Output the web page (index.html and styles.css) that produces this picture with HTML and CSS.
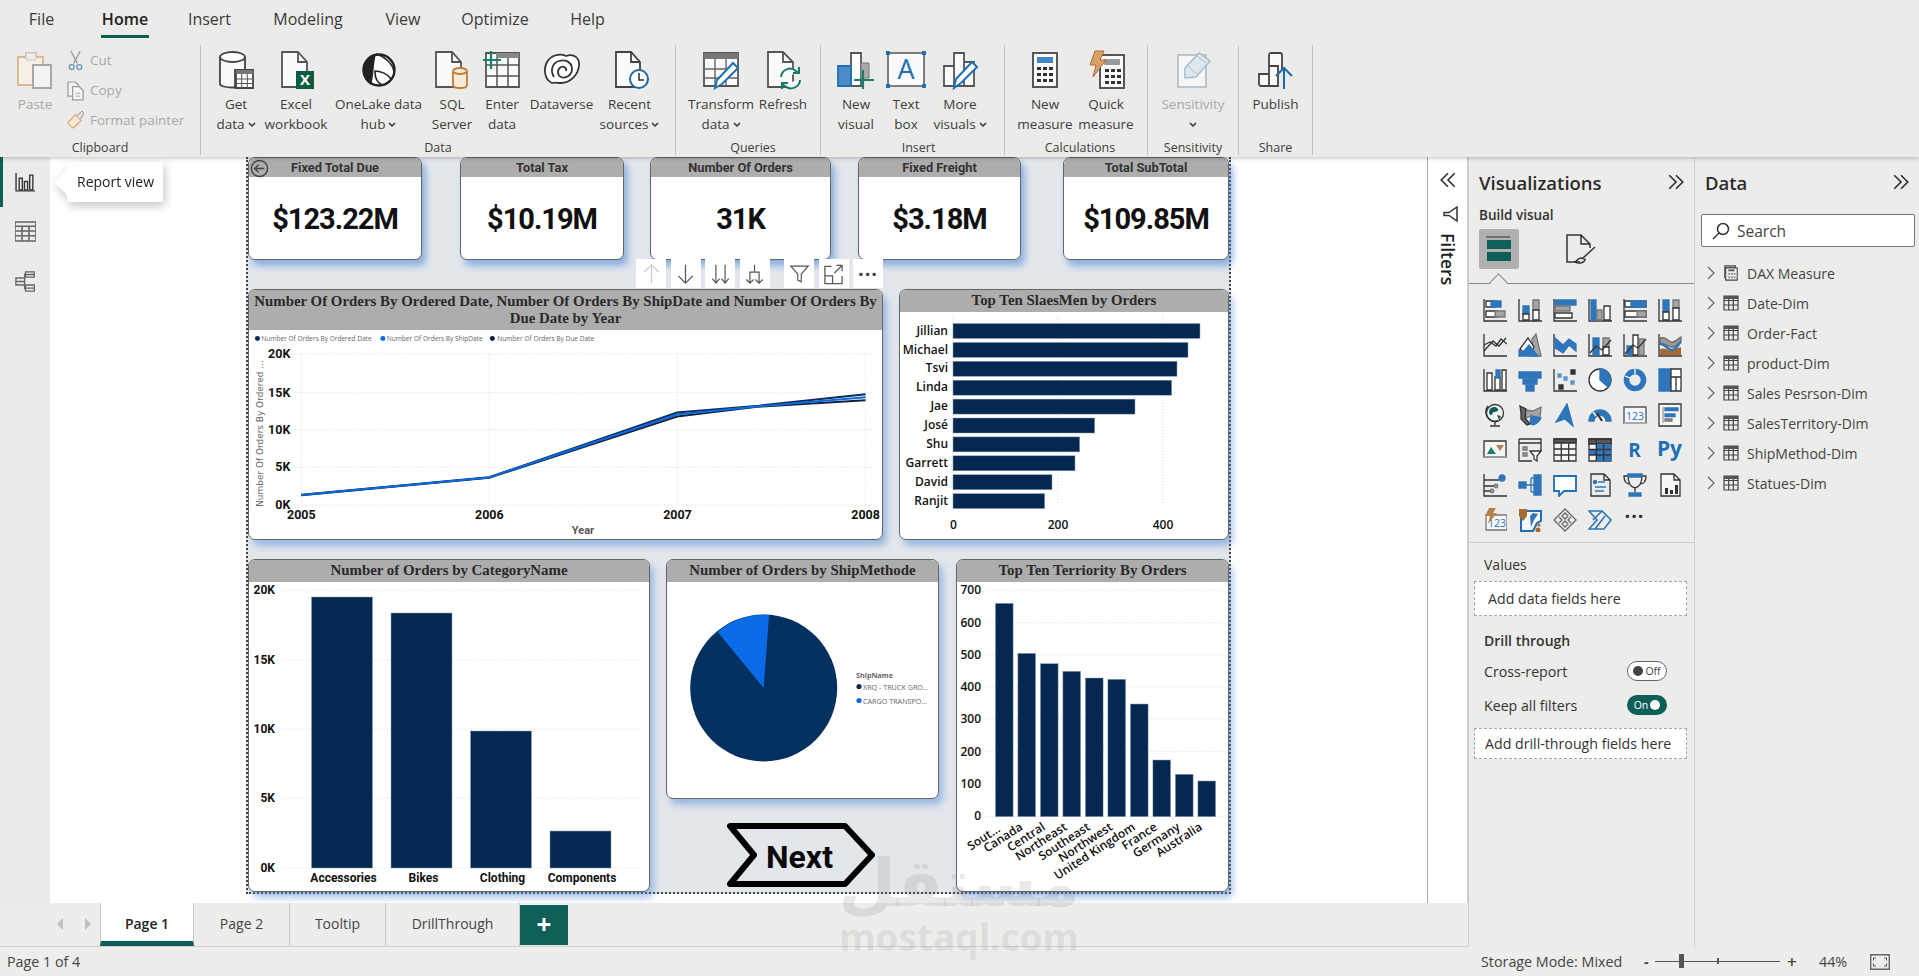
FILE: index.html
```html
<!DOCTYPE html>
<html lang="en">
<head>
<meta charset="utf-8">
<title>Power BI Desktop</title>
<link rel="stylesheet" href="styles.css">
</head>
<body>
<svg class="defs" width="0" height="0">
  <symbol id="tbl" viewBox="0 0 16 16"><path class="tb" d="M1 1h14v14H1zM1 5.5h14M1 10h14M5.7 1v14M10.3 1v14"/><path class="tbh" d="M1 1h14v3H1z"/></symbol>
  <symbol id="dbl" viewBox="0 0 16 16"><path d="M2 2l6 6-6 6M8 2l6 6-6 6" class="chev"/></symbol>
  <symbol id="dd" viewBox="0 0 8 6"><path d="M1 1l3 3 3-3" class="ddp"/></symbol>
</svg>
<div class="app">
  <header class="ribbon">
    <nav class="tabs">
      <span>File</span><span class="on">Home</span><span>Insert</span><span>Modeling</span><span>View</span><span>Optimize</span><span>Help</span>
    </nav>
    <div class="groups">
      <section class="grp g-clip">
        <div class="btns">
          <div class="btn off w56">
            <svg class="ri" viewBox="0 0 40 40"><path d="M3 7h8V3h10v4h7v28H3z" fill="#f6efe6" stroke="#dcb98e" stroke-width="2"/><path d="M11 3h10v7H11z" fill="#eee" stroke="#c8c8c8"/><path d="M18 15h18v23H18z" fill="#f3f3f3" stroke="#a8a8a8" stroke-width="2"/></svg>
            <p>Paste</p>
          </div>
          <div class="clipcol">
            <div class="cr"><svg viewBox="0 0 18 22"><path d="M4 1l7 13M14 1L7 14" stroke="#9a9a9a" fill="none" stroke-width="1.4"/><circle cx="5" cy="18" r="2.6" fill="none" stroke="#6a94c4" stroke-width="1.4"/><circle cx="13" cy="18" r="2.6" fill="none" stroke="#6a94c4" stroke-width="1.4"/></svg><span>Cut</span></div>
            <div class="cr"><svg viewBox="0 0 18 22"><path d="M1 2h8l3 3v12H1z" fill="#f2f2f2" stroke="#999" stroke-width="1.3"/><path d="M6 7h7l4 4v10H6z" fill="#f8f8f8" stroke="#999" stroke-width="1.3"/><path d="M9 14h5M9 17h5" stroke="#aaa"/></svg><span>Copy</span></div>
            <div class="cr"><svg viewBox="0 0 18 22"><path d="M1 13l8-8 6 6-8 8c-2-1-5-3-6-6z" fill="#f4e7d6" stroke="#d8a878" stroke-width="1.3"/><path d="M10 6l6-5 2 2-4 7" fill="#ddd" stroke="#999"/></svg><span>Format painter</span></div>
          </div>
        </div>
        <h6>Clipboard</h6>
      </section>
      <section class="grp g-data">
        <div class="btns">
          <div class="btn w56">
            <svg class="ri" viewBox="0 0 40 40"><path d="M4 7v27c0 2 6 3.500 12 3.500h3V20h10V7" fill="#fafafa" stroke="#444" stroke-width="1.800"/><ellipse cx="16.500" cy="7" rx="12.500" ry="5" fill="#fff" stroke="#444" stroke-width="1.800"/><path d="M20 20h17v18H20z" fill="#fff" stroke="#444" stroke-width="1.800"/><path d="M20 20h17v4H20z" fill="#777"/><path d="M20 29h17M20 33.500h17M25.700 24v14M31.300 24v14" stroke="#555"/></svg>
            <p>Get<br>data<svg class="dd"><use href="#dd"/></svg></p>
          </div>
          <div class="btn w64">
            <svg class="ri" viewBox="0 0 40 40"><path d="M6 2h16l9 10v25H6z" fill="#fafafa" stroke="#555" stroke-width="1.800"/><path d="M22 2v10h9" fill="none" stroke="#555" stroke-width="1.800"/><rect x="20" y="21" width="18" height="18" fill="#0d5c42"/><text class="xl" x="29" y="35">X</text></svg>
            <p>Excel<br>workbook</p>
          </div>
          <div class="btn w101">
            <svg class="ri" viewBox="0 0 40 40"><circle cx="20" cy="20" r="15.500" fill="#fff" stroke="#222" stroke-width="2.400"/><path d="M8 9c-6 9-5 20 4 26 3-9 2-20 5-31C13 4 10 6 8 9z" fill="#222"/><path d="M17 4c8 2 16 9 18 17M15 21c7 0 14 3 17 8M16 22c0 6 3 11 7 13" fill="none" stroke="#222" stroke-width="1.600"/></svg>
            <p>OneLake data<br>hub<svg class="dd"><use href="#dd"/></svg></p>
          </div>
          <div class="btn w46">
            <svg class="ri" viewBox="0 0 40 40"><path d="M4 2h16l9 10v25H4z" fill="#fafafa" stroke="#555" stroke-width="1.800"/><path d="M20 2v10h9" fill="none" stroke="#555" stroke-width="1.800"/><path d="M21 22v13c0 2 3 3 7 3s7-1 7-3V22" fill="#f7ead9" stroke="#c47a38" stroke-width="1.800"/><ellipse cx="28" cy="21" rx="7" ry="3" fill="#f7ead9" stroke="#c47a38" stroke-width="1.800"/></svg>
            <p>SQL<br>Server</p>
          </div>
          <div class="btn w54">
            <svg class="ri" viewBox="0 0 40 40"><path d="M4 3h33v34H4z" fill="#fafafa" stroke="#555" stroke-width="1.800"/><path d="M14 3h23v5H14z" fill="#888"/><path d="M4 15h33M4 26h33M15 8v29M26 8v29" stroke="#555" stroke-width="1.500"/><path d="M9 1v18M1 10h18" stroke="#17806f" stroke-width="2.200"/></svg>
            <p>Enter<br>data</p>
          </div>
          <div class="btn w65">
            <svg class="ri" viewBox="0 0 40 40"><path d="M10 33C3 30 1 20 5 12c4-7 13-9 19-6 8-3 14 2 13 10-1 9-9 17-18 17-3 0-6-1-9 0z" fill="#fff" stroke="#333" stroke-width="1.800"/><path d="M12 27c-4-6-2-14 5-16 6-2 13 1 13 8 0 6-6 10-11 8-4-2-4-8 0-10 3-1 6 1 5 4" fill="none" stroke="#333" stroke-width="1.800"/></svg>
            <p>Dataverse</p>
          </div>
          <div class="btn w71">
            <svg class="ri" viewBox="0 0 40 40"><path d="M6 2h15l9 10v25H6z" fill="#fafafa" stroke="#444" stroke-width="1.800"/><path d="M21 2v10h9" fill="none" stroke="#444" stroke-width="1.800"/><circle cx="29" cy="29" r="9" fill="#fff" stroke="#1a6aa8" stroke-width="2"/><path d="M29 23v7h5" fill="none" stroke="#333" stroke-width="1.600"/></svg>
            <p>Recent<br>sources<svg class="dd"><use href="#dd"/></svg></p>
          </div>
        </div>
        <h6>Data</h6>
      </section>
      <section class="grp g-query">
        <div class="btns">
          <div class="btn w70">
            <svg class="ri" viewBox="0 0 40 40"><path d="M3 3h34v33H3z" fill="#fafafa" stroke="#555" stroke-width="1.800"/><path d="M3 3h34v6H3z" fill="#777"/><path d="M3 19h34M3 28h34M14 9v27M25 9v27" stroke="#666" stroke-width="1.400"/><path d="M14 38l2-8 16-17 5 5-16 16z" fill="#fff" stroke="#1f6fb2" stroke-width="2"/></svg>
            <p>Transform<br>data<svg class="dd"><use href="#dd"/></svg></p>
          </div>
          <div class="btn w54">
            <svg class="ri" viewBox="0 0 40 40"><path d="M5 2h15l10 10v25H5z" fill="#fafafa" stroke="#555" stroke-width="1.800"/><path d="M20 2v10h10" fill="none" stroke="#555" stroke-width="1.800"/><path d="M18 27a9 9 0 0 1 15-6l3 2M37 30a9 9 0 0 1-15 6l-3-2" fill="#fafafa" stroke="#1a7a68" stroke-width="2"/><path d="M36 17v6h-6M19 39v-6h6" fill="none" stroke="#1a7a68" stroke-width="2"/></svg>
            <p>Refresh</p>
          </div>
        </div>
        <h6>Queries</h6>
      </section>
      <section class="grp g-insert">
        <div class="btns">
          <div class="btn w46">
            <svg class="ri" viewBox="0 0 40 40"><path d="M15 3h10v33H15z" fill="#fff" stroke="#555" stroke-width="1.800"/><path d="M2 16h13v20H2z" fill="#4a8bc8" stroke="#1f6fb2" stroke-width="1.800"/><path d="M25 13h8v15h-8z" fill="#aaa" stroke="#777"/><path d="M27 20v19M18 30h20" stroke="#17806f" stroke-width="2.200"/></svg>
            <p>New<br>visual</p>
          </div>
          <div class="btn w54">
            <svg class="ri" viewBox="0 0 40 40"><path d="M2 3h36v33H2z" fill="#f8fafc" stroke="#555" stroke-width="1.500"/><path d="M0 1h4v4H0zM36 1h4v4h-4zM0 34h4v4H0zM36 34h4v4h-4z" fill="#1f6fb2"/><text class="ta" x="20" y="29">A</text></svg>
            <p>Text<br>box</p>
          </div>
          <div class="btn w54">
            <svg class="ri" viewBox="0 0 40 40"><path d="M4 16h10v20H4zM14 3h10v33H14zM24 12h10v24H24z" fill="#fafafa" stroke="#555" stroke-width="1.800"/><path d="M14 38l2-9 16-17 5 5-16 16z" fill="#fff" stroke="#1f6fb2" stroke-width="2"/></svg>
            <p>More<br>visuals<svg class="dd"><use href="#dd"/></svg></p>
          </div>
        </div>
        <h6>Insert</h6>
      </section>
      <section class="grp g-calc">
        <div class="btns">
          <div class="btn w64">
            <svg class="ri" viewBox="0 0 40 40"><path d="M8 3h24v34H8z" fill="#fafafa" stroke="#555" stroke-width="2"/><path d="M12 7h16v6H12z" fill="#3f86c6"/><path d="M12 17h4v3h-4zM18 17h4v3h-4zM24 17h4v3h-4zM12 23h4v3h-4zM18 23h4v3h-4zM24 23h4v3h-4zM12 29h4v3h-4zM18 29h4v3h-4zM24 29h4v3h-4z" fill="#333"/></svg>
            <p>New<br>measure</p>
          </div>
          <div class="btn w58">
            <svg class="ri" viewBox="0 0 40 40"><path d="M14 5h24v33H14z" fill="#fafafa" stroke="#555" stroke-width="2"/><path d="M18 9h16v6H18z" fill="#999"/><path d="M19 19h4v3h-4zM25 19h4v3h-4zM31 19h4v3h-4zM19 25h4v3h-4zM25 25h4v3h-4zM31 25h4v3h-4zM19 31h4v3h-4zM25 31h4v3h-4zM31 31h4v3h-4z" fill="#333"/><path d="M9 1h9l-4 9h6L7 27l3-12H4z" fill="#d9a06a" stroke="#a96a30"/></svg>
            <p>Quick<br>measure</p>
          </div>
        </div>
        <h6>Calculations</h6>
      </section>
      <section class="grp g-sens">
        <div class="btns">
          <div class="btn off w90">
            <svg class="ri" viewBox="0 0 40 40"><path d="M5 5h28v32H5z" fill="#f4f6f8" stroke="#bcc4cc" stroke-width="2"/><path d="M12 18L26 3l11 8-14 16-11 1z" fill="#dfe7ee" stroke="#a8bccd" stroke-width="1.500"/><path d="M15 16l9 8M24 6l9 7" stroke="#a8bccd"/></svg>
            <p>Sensitivity<br><svg class="dd grey"><use href="#dd"/></svg></p>
          </div>
        </div>
        <h6>Sensitivity</h6>
      </section>
      <section class="grp g-share">
        <div class="btns">
          <div class="btn w73">
            <svg class="ri" viewBox="0 0 40 40"><path d="M3 24h10v12H5a2 2 0 0 1-2-2zM13 16h9v20h-9zM13 16V5a2 2 0 0 1 2-2h9a2 2 0 0 1 2 2v14" fill="#fafafa" stroke="#444" stroke-width="1.800"/><path d="M28 39V18M20 26l8-8 8 8" fill="none" stroke="#1a6aa8" stroke-width="2"/></svg>
            <p>Publish</p>
          </div>
        </div>
        <h6>Share</h6>
      </section>
    </div>
  </header>

  <main class="body">
    <aside class="rail">
      <div class="railbtn active"><svg viewBox="0 0 20 20"><path d="M1 1v17h18" class="rl"/><path d="M4 6h3v11H4zM9 9h3v8H9zM14 3h3v14h-3z" class="rl"/></svg></div>
      <div class="railbtn"><svg viewBox="0 0 20 20"><path d="M0 1h20v18H0zM0 1h20v4H0zM0 9.500h20M0 14h20M6.700 5v14M13.300 5v14" class="rg"/></svg></div>
      <div class="railbtn"><svg viewBox="0 0 24 24"><path d="M12 1h10v6H12zM12 16h10v7H12zM1 8h10v8H1zM1 12h10M12 4v0M11 10V4h1M11 14v6h1M12 19.500h10M12 4h10" class="rg"/></svg></div>
    </aside>
    <div class="tip">Report view</div>

    <div class="center">
      <div class="stage">
        <div class="canvas">
          <div class="page">
            <div class="row cards">
              <article class="card c1"><h3><svg class="backb" viewBox="0 0 20 20"><circle cx="10" cy="10" r="8.500"/><path d="M15 10H5M9 6l-4 4 4 4"/></svg>Fixed Total Due</h3><b>$123.22M</b></article>
              <article class="card c2"><h3>Total Tax</h3><b>$10.19M</b></article>
              <article class="card c3"><h3>Number Of Orders</h3><b>31K</b></article>
              <article class="card c4"><h3>Fixed Freight</h3><b>$3.18M</b></article>
              <article class="card c5"><h3>Total SubTotal</h3><b>$109.85M</b></article>
            </div>

            <div class="row mid">
              <article class="chart ch1">
                <h2 class="h39">Number Of Orders By Ordered Date, Number Of Orders By ShipDate and Number Of Orders By Due Date by Year</h2>
                <svg class="plot" viewBox="249 329 633 210">
                  <g class="legend">
                    <circle cx="256" cy="337.500" r="2.500" fill="#0b2a55"/><text x="260" y="340">Number Of Orders By Ordered Date</text>
                    <circle cx="382" cy="337.500" r="2.500" fill="#0a6be0"/><text x="386" y="340">Number Of Orders By ShipDate</text>
                    <circle cx="492" cy="337.500" r="2.500" fill="#111f3a"/><text x="497" y="340">Number Of Orders By Due Date</text>
                  </g>
                  <path class="grid" d="M290 353h587M290 391.500h587M290 429h587M290 467h587M290 505h587M300 353v152M488.700 353v152M677.700 353v152M867 353v152"/>
                  <polyline class="ln a" points="300,494.500 488.700,477 677.700,412 760,405 867,393.500"/>
                  <polyline class="ln c" points="300,495 488.700,477.500 677.700,416 760,406 867,399.500"/>
                  <polyline class="ln b" points="300,494.800 488.700,477.200 677.700,414 760,405.500 867,396.500"/>
                  <g class="ax end">
                    <text x="289" y="357">20K</text><text x="289" y="396">15K</text><text x="289" y="433">10K</text><text x="289" y="471">5K</text><text x="289" y="509">0K</text>
                  </g>
                  <g class="ax mid-a">
                    <text x="300" y="519">2005</text><text x="489" y="519">2006</text><text x="678" y="519">2007</text><text x="867" y="519">2008</text>
                  </g>
                  <text class="axt" x="583" y="534">Year</text>
                  <text class="ayt" transform="translate(262 433) rotate(-90)">Number Of Orders By Ordered ...</text>
                </svg>
              </article>
              <article class="chart ch2">
                <h2 class="h22">Top Ten SlaesMen by Orders</h2>
                <svg class="plot" viewBox="900 312 328 227">
                  <path class="grid" d="M953 316v190M1057.700 316v190M1162.700 316v190"/>
                  <g class="bars">
                    <rect x="953" y="323.500" width="247" height="15"/><rect x="953" y="342.400" width="235" height="15"/><rect x="953" y="361.300" width="224" height="15"/><rect x="953" y="380.200" width="218.700" height="15"/><rect x="953" y="399.100" width="182" height="15"/><rect x="953" y="418" width="141.700" height="15"/><rect x="953" y="436.900" width="126.700" height="15"/><rect x="953" y="455.800" width="122" height="15"/><rect x="953" y="474.700" width="99" height="15"/><rect x="953" y="493.600" width="91.700" height="15"/>
                  </g>
                  <g class="cat end">
                    <text x="948" y="334.500">Jillian</text><text x="948" y="353.500">Michael</text><text x="948" y="372">Tsvi</text><text x="948" y="391">Linda</text><text x="948" y="410">Jae</text><text x="948" y="429">José</text><text x="948" y="448">Shu</text><text x="948" y="466.500">Garrett</text><text x="948" y="485.500">David</text><text x="948" y="504.500">Ranjit</text>
                  </g>
                  <g class="cat mid-a">
                    <text x="953.500" y="529">0</text><text x="1058" y="529">200</text><text x="1163" y="529">400</text>
                  </g>
                </svg>
              </article>
            </div>

            <div class="row low">
              <article class="chart ch3">
                <h2 class="h22">Number of Orders by CategoryName</h2>
                <svg class="plot" viewBox="249 582 400 309">
                  <path class="grid" d="M282 590h362M282 660h362M282 729h362M282 798h362M282 868h362"/>
                  <g class="bars">
                    <rect x="311.500" y="597" width="61" height="271"/><rect x="391" y="613" width="61" height="255"/><rect x="470.500" y="731" width="61" height="137"/><rect x="550" y="831" width="61" height="37"/>
                  </g>
                  <g class="ax end">
                    <text x="275" y="594">20K</text><text x="275" y="664">15K</text><text x="275" y="733">10K</text><text x="275" y="802">5K</text><text x="275" y="872">0K</text>
                  </g>
                  <g class="ax mid-a">
                    <text x="343.500" y="882">Accessories</text><text x="423.500" y="882">Bikes</text><text x="502.500" y="882">Clothing</text><text x="582" y="882">Components</text>
                  </g>
                </svg>
              </article>
              <div class="midcol">
                <article class="chart ch4">
                  <h2 class="h22">Number of Orders by ShipMethode</h2>
                  <svg class="plot" viewBox="667 582 271 216">
                    <circle cx="763.700" cy="688" r="73.500" fill="#03305f"/>
                    <path d="M763.700 688L717.700 632A73.500 73.500 0 0 1 769 615z" fill="#0a6be8"/>
                    <g class="lg2">
                      <text class="lgt" x="856" y="678">ShipName</text>
                      <circle cx="859" cy="686.500" r="2.600" fill="#0b2a55"/><text x="863" y="690">XRQ - TRUCK GRO...</text>
                      <circle cx="859" cy="700.500" r="2.600" fill="#0a6be8"/><text x="863" y="703.500">CARGO TRANSPO...</text>
                    </g>
                  </svg>
                </article>
                <svg class="next" viewBox="727 823 148 64">
                  <path class="nextp" d="M730 826H845L872 855 845 884H730L754 855Z"/>
                  <text class="nextt" x="766" y="868">Next</text>
                </svg>
              </div>
              <article class="chart ch5">
                <h2 class="h22">Top Ten Terriority By Orders</h2>
                <svg class="plot" viewBox="957 582 271 309">
                  <path class="grid" d="M986 590h237M986 622.700h237M986 655h237M986 687h237M986 719h237M986 751.700h237M986 784h237M986 816.700h237"/>
                  <g class="bars">
                    <rect x="995.400" y="603.300" width="17.700" height="213.400"/><rect x="1017.900" y="653.300" width="17.700" height="163.400"/><rect x="1040.400" y="663.700" width="17.700" height="153"/><rect x="1062.900" y="671.300" width="17.700" height="145.400"/><rect x="1085.400" y="678" width="17.700" height="138.700"/><rect x="1107.900" y="679.300" width="17.700" height="137.400"/><rect x="1130.400" y="704" width="17.700" height="112.700"/><rect x="1152.900" y="760" width="17.700" height="56.700"/><rect x="1175.400" y="774.300" width="17.700" height="42.400"/><rect x="1197.900" y="781" width="17.700" height="35.700"/>
                  </g>
                  <g class="cat end">
                    <text x="981" y="594">700</text><text x="981" y="627">600</text><text x="981" y="659">500</text><text x="981" y="691">400</text><text x="981" y="723">300</text><text x="981" y="756">200</text><text x="981" y="788">100</text><text x="981" y="820">0</text>
                  </g>
                  <g class="cat end">
                    <text transform="translate(1001 831) rotate(-33)">Sout...</text>
                    <text transform="translate(1023.500 829) rotate(-33)">Canada</text>
                    <text transform="translate(1046 829) rotate(-33)">Central</text>
                    <text transform="translate(1068 829) rotate(-33)">Northeast</text>
                    <text transform="translate(1091 829) rotate(-33)">Southeast</text>
                    <text transform="translate(1113.500 829) rotate(-33)">Northwest</text>
                    <text transform="translate(1136 829) rotate(-33)">United Kingdom</text>
                    <text transform="translate(1158 829) rotate(-33)">France</text>
                    <text transform="translate(1181 829) rotate(-33)">Germany</text>
                    <text transform="translate(1203 829) rotate(-33)">Australia</text>
                  </g>
                </svg>
              </article>
            </div>

            <div class="vtools">
              <span><svg viewBox="0 0 20 24" class="tu"><path d="M10 22V2M2 10l8-8 8 8"/></svg></span>
              <span><svg viewBox="0 0 20 24"><path d="M10 2v20M2 14l8 8 8-8"/></svg></span>
              <span><svg viewBox="0 0 20 24"><path d="M5 2v20M1 17l4 5 4-5M15 2v20M11 17l4 5 4-5"/></svg></span>
              <span><svg viewBox="0 0 20 24"><path d="M10 2v8M5 22V10h10v12M1 18l4 4 4-4M11 18l4 4 4-4"/></svg></span>
              <span class="sp"><svg viewBox="0 0 24 24"><path d="M2 3h20l-8 9v9l-4-2v-7z"/></svg></span>
              <span><svg viewBox="0 0 22 22"><path d="M9 3H2v18h18v-8M2 13h8v8M12 10l8-8M14 2h6v6"/></svg></span>
              <span class="dots">···</span>
            </div>
          </div>
        </div>
        <aside class="filters">
          <svg class="ch" viewBox="0 0 16 16"><path d="M14 2L8 8l6 6M8 2L2 8l6 6" class="chev"/></svg>
          <svg class="fn" viewBox="0 0 16 16"><path d="M14 1v14L6 9.500H1v-3h5z" class="chev"/></svg>
          <span>Filters</span>
        </aside>
      </div>
      <div class="pagetabs">
        <div class="arrows"><i class="al"></i><i class="ar"></i></div>
        <span class="ptab t1 on">Page 1</span>
        <span class="ptab t2">Page 2</span>
        <span class="ptab t3">Tooltip</span>
        <span class="ptab t4">DrillThrough</span>
        <span class="plus">+</span>
      </div>
    </div>

    <aside class="vizpane">
      <div class="phead"><h4>Visualizations</h4><svg class="ch"><use href="#dbl"/></svg></div>
      <div class="sub">Build visual</div>
      <div class="buildrow">
        <div class="buildon"><svg viewBox="0 0 30 30"><path d="M2 3h24" stroke="#333" fill="none"/><path d="M3 6h24v9H3zM3 18h24v9H3z" fill="#0d5f58"/></svg></div>
        <svg class="fmt" viewBox="0 0 32 32"><path d="M15 29H2V2h14l9 9v4M16 2v9h9" class="chev"/><path d="M30 14L18 25M16 25c-3 0-4 3-6 4 4 2 10 1 10-3z" class="chev"/></svg>
        <i class="notch"></i>
      </div>
      <div class="vizgrid">
        <svg class="vi" viewBox="0 0 24 24"><path d="M1 1v22h23"/><path class="w" d="M3 3h9v6H3z"/><path class="b" d="M8 3h10v6H8z"/><path class="w" d="M3 13h11v6H3z"/><path class="g" d="M12 13h10v6H12z"/></svg>
        <svg class="vi" viewBox="0 0 24 24"><path d="M1 1v22h23"/><path class="b" d="M5 8h6v8H5z"/><path class="w" d="M5 16h6v6H5z"/><path class="g" d="M15 2h6v10h-6z"/><path class="w" d="M15 12h6v10h-6z"/></svg>
        <svg class="vi" viewBox="0 0 24 24"><path d="M1 1v22h23"/><path class="b" d="M2 2h21v5H2z"/><path class="g" d="M2 8h15v5H2z"/><path class="w" d="M2 15h17v5H2z"/></svg>
        <svg class="vi" viewBox="0 0 24 24"><path d="M1 1v22h23"/><path class="b" d="M3 2h5v20H3z"/><path class="g" d="M9 12h5v10H9z"/><path class="w" d="M16 8h6v14h-6z"/></svg>
        <svg class="vi" viewBox="0 0 24 24"><path d="M1 1v22h23"/><path class="w" d="M2 3h21v6H2z"/><path class="b" d="M8 3h15v6H8z"/><path class="w" d="M2 13h21v6H2z"/><path class="g" d="M14 13h9v6h-9z"/></svg>
        <svg class="vi" viewBox="0 0 24 24"><path d="M1 1v22h23"/><path class="b" d="M5 2h6v12H5z"/><path class="w" d="M5 14h6v8H5z"/><path class="g" d="M15 2h6v8h-6z"/><path class="w" d="M15 10h6v12h-6z"/></svg>

        <svg class="vi" viewBox="0 0 24 24"><path d="M1 1v22h23"/><path d="M1 18l9-10 6 5 7-8"/><path class="bl" d="M1 12l6-3 6 4 5-7 6 5"/></svg>
        <svg class="vi" viewBox="0 0 24 24"><path class="g" d="M14 6l4-5 5 22h-9z"/><path class="w" d="M2 16l8-11 6 9-6 9z"/><path class="b" d="M1 23v-6l4 2 6-7 9 11z"/></svg>
        <svg class="vi" viewBox="0 0 24 24"><path d="M1 1v22h23"/><path class="b" d="M2 5l8 7 6-6 7 5v7l-7-6-6 8-8-5z"/></svg>
        <svg class="vi" viewBox="0 0 24 24"><path d="M1 1v22h23"/><path class="b" d="M5 5h6v17H5z"/><path class="g" d="M15 5h6v9h-6z"/><path class="w" d="M15 14h6v8h-6z"/><path d="M2 20l6-7 6 4 9-10"/></svg>
        <svg class="vi" viewBox="0 0 24 24"><path d="M1 1v22h23"/><path class="b" d="M4 13h5v9H4z"/><path class="w" d="M10 2h5v20h-5z"/><path class="g" d="M16 6h5v16h-5z"/><path d="M2 21l8-9 5 3 8-9"/></svg>
        <svg class="vi" viewBox="0 0 24 24"><path d="M1 1v22h23"/><path d="M2 5c7-2 8 5 13 4s5-4 8-5v5c-3 1-4 4-8 5S8 10 2 11z" fill="#999" stroke="#666"/><path d="M2 16c5-2 8 2 12 1s6-2 9-3v8H2z" fill="#a86a35" stroke="none"/><path d="M2 11c5-1 7 6 12 6s6-7 9-8" stroke="#2f75b9" stroke-width="2.600"/></svg>

        <svg class="vi" viewBox="0 0 24 24"><path d="M1 1v22h23"/><path class="w" d="M4 5h5v17H4z"/><path class="w" d="M12 9h5v13h-5z"/><path class="b" d="M13 2h4v8h-4z"/><path class="w" d="M19 2h4v20h-4z"/></svg>
        <svg class="vi" viewBox="0 0 24 24"><path class="b" d="M1 4h22v6H1z"/><path class="b" d="M5 11h14v5H5z"/><path class="b" d="M8 17h8v6H8z"/></svg>
        <svg class="vi" viewBox="0 0 24 24"><path d="M1 1v22h23"/><path class="dk" d="M6 17h4v4H6zM18 2h4v4h-4z"/><path class="b2" d="M5 6h3v3H5zM11 9h3v3h-3zM18 13h3v3h-3z"/></svg>
        <svg class="vi" viewBox="0 0 24 24"><circle class="w" cx="12" cy="12" r="11"/><path class="b" d="M12 1a11 11 0 0 1 8 18l-8-7z"/></svg>
        <svg class="vi" viewBox="0 0 24 24"><circle cx="12" cy="12" r="8.500" fill="none" stroke="#2f75b9" stroke-width="5.600"/><path d="M12 1v5" stroke="#fff"/><path d="M2 8l5 2" stroke="#fff"/></svg>
        <svg class="vi" viewBox="0 0 24 24"><path class="b" d="M1 1h12v11H1zM1 12h12v11H1z"/><path class="w" d="M13 1h10v8H13zM13 9h5v14h-5zM18 9h5v14h-5z"/></svg>

        <svg class="vi" viewBox="0 0 24 24"><circle cx="12" cy="10" r="8.500" fill="#eef4f2"/><path d="M8 5c3-2 6-1 7 1s-2 3-4 3-1 3-3 3-3-5 0-7zM14 12l4 1-2 4z" fill="#0d5f58" stroke="none"/><path d="M5 3a9.500 9.500 0 0 0 10 15M12 19v3M7 23h10"/></svg>
        <svg class="vi" viewBox="0 0 24 24"><path class="g" d="M7 7l8 1 8-4-1 11-9-2-5 2z"/><path class="b" d="M13 13l10 2c-2 4-5 6-8 7l-3-2z"/><path d="M2 3l6 3-1 9 5 6-3 1-6-6V10z" fill="#666"/></svg>
        <svg class="vi" viewBox="0 0 24 24"><path class="b" d="M14 1l6 22-8-7-9 3z"/></svg>
        <svg class="vi" viewBox="0 0 24 24"><path class="b" d="M1 18a11 11 0 0 1 22 0h-5a6 6 0 0 0-12 0z"/><path d="M9 10l5 8" stroke-width="2"/><path d="M5 9l3 4" stroke="#fff"/></svg>
        <svg class="vi" viewBox="0 0 24 24"><path d="M1 4h22v16H1z" fill="#f4f7fa" stroke="#555" stroke-width="1.400"/><path d="M1 20h22" stroke="#aaa" stroke-width="2"/><text class="t123" x="12" y="16.500">123</text></svg>
        <svg class="vi" viewBox="0 0 24 24"><path d="M1 1h22v22H1z" fill="#f6f8fa"/><path d="M5 4v16" stroke="#999"/><path class="b" d="M7 5h13v2.500H7zM7 11h10v2.500H7z"/><path class="g" d="M7 16h7v2H7z"/></svg>

        <svg class="vi" viewBox="0 0 24 24"><path d="M1 3h22v16H1z" fill="#f5f5f5"/><path d="M1 19h22" stroke="#999" stroke-width="2"/><path d="M4 16l4-7 5 7z" fill="#1d7e6e" stroke="none"/><path d="M13 7h8l-4 6z" fill="#b5804c" stroke="none"/></svg>
        <svg class="vi" viewBox="0 0 24 24"><path d="M1 1h22v12M14 23H1V1M1 5h22"/><path class="g" d="M5 9h4v3H5zM5 15h4v3H5z"/><path class="w" d="M12 13h11l-4 5v5l-3-2v-3z"/></svg>
        <svg class="vi" viewBox="0 0 24 24"><path d="M1 1h22v22H1z" fill="#f5f5f5"/><path d="M1 1h22v4H1z" fill="#555"/><path d="M1 11h22M1 17h22M8.300 5v18M15.700 5v18"/></svg>
        <svg class="vi" viewBox="0 0 24 24"><path d="M1 1h22v22H1z" fill="#f5f5f5"/><path d="M1 1h22v5H1z" fill="#555"/><path d="M8 6h15v17H8zM1 12h7v5H1z" fill="#2f75b9" stroke="none"/><path d="M1 11.500h22M1 17h22M8.300 1v22M15.700 6v17"/></svg>
        <span class="tr">R</span>
        <span class="tp">Py</span>

        <svg class="vi" viewBox="0 0 24 24"><path d="M1 1v22h23M1 7h15M1 13h11M1 18h7"/><circle class="b" cx="19" cy="5" r="3"/><circle class="g" cx="13" cy="13" r="1.800"/><circle class="g" cx="9" cy="18" r="1.800"/></svg>
        <svg class="vi" viewBox="0 0 24 24"><path d="M8 12h5M13 5v14M13 5h3M13 12h3M13 19h3" stroke="#2f75b9"/><path class="b" d="M1 9h7v6H1zM16 2h7v6h-7zM16 9h7v6h-7zM16 16h7v6h-7z"/></svg>
        <svg class="vi" viewBox="0 0 24 24"><path d="M1 3h22v15H11l-5 5v-5H1z" fill="#fff" stroke="#1f6fb2" stroke-width="1.800"/></svg>
        <svg class="vi" viewBox="0 0 24 24"><path d="M3 1h13l6 6v16H3zM16 1v6h6"/><circle class="b" cx="7" cy="9" r="1.600"/><path d="M10 9h7M7 14h11M7 18h9" stroke="#2f75b9"/></svg>
        <svg class="vi" viewBox="0 0 24 24"><path d="M5 3H1c0 5 2 8 6 8M19 3h4c0 5-2 8-6 8M5 2h14c0 8-2 12-7 13-5-1-7-5-7-13zM12 15v4"/><path class="b" d="M6 20h12v3H6zM5 1h14v3H5z"/></svg>
        <svg class="vi" viewBox="0 0 24 24"><path d="M3 1h13l6 6v16H3zM16 1v6h6" fill="#f8f8f8"/><path d="M7 15h3v6H7zM12 17h3v4h-3zM17 12h3v9h-3z" fill="#333" stroke="none"/></svg>

        <svg class="vi" viewBox="0 0 24 24"><path d="M3 7h21v15H3z" fill="#f5f7f9" stroke="#777"/><text class="t123 big" x="14" y="19">123</text><path d="M6 0h7l-3 5h4L5 16l2-8H2z" fill="#b5804c" stroke="none"/></svg>
        <svg class="vi" viewBox="0 0 24 24"><path d="M3 3h20v10l-4 2-4 8H3z" fill="#f4f8fb" stroke="#1f6fb2" stroke-width="2"/><path d="M12 8l3-3 5 1-4 6-3 7z" fill="#2f75b9" stroke="none"/><path d="M1 1h8v7l-4 5-4-5z" fill="#a86a35" stroke="none"/><circle cx="21" cy="17" r="1.600" fill="#a86a35" stroke="none"/><circle cx="20" cy="22" r="2.500" fill="#a86a35" stroke="none"/></svg>
        <svg class="vi" viewBox="0 0 24 24"><path d="M12 1l11 11-11 11L1 12zM12 5l3 3-3 3-3-3zM12 13l3 3-3 3-3-3zM6 9l3 3-3 3M18 9l-3 3 3 3" stroke="#666"/></svg>
        <svg class="vi" viewBox="0 0 24 24"><path d="M1 3h13l9 9-7 9H1l8-9zM14 3l-9 9M17 8L7 21" fill="none" stroke="#2f75b9" stroke-width="1.600"/></svg>
        <span class="more">···</span>
      </div>
      <div class="sect">
        <div class="lab">Values</div>
        <div class="well h35">Add data fields here</div>
        <div class="sub dt">Drill through</div>
        <div class="tg r1"><span>Cross-report</span><em class="sw off"><i></i>Off</em></div>
        <div class="tg r2"><span>Keep all filters</span><em class="sw onn">On<i></i></em></div>
        <div class="well h31 drill">Add drill-through fields here</div>
      </div>
    </aside>

    <aside class="datapane">
      <div class="phead"><h4>Data</h4><svg class="ch"><use href="#dbl"/></svg></div>
      <div class="search"><svg viewBox="0 0 18 18"><circle cx="11" cy="7" r="5.500" class="chev"/><path d="M7 11l-6 6" class="chev"/></svg>Search</div>
      <ul class="fields">
        <li><svg class="chv" viewBox="0 0 8 14"><path d="M1 1l6 6-6 6" class="chev"/></svg><svg class="ti" viewBox="0 0 16 18"><path d="M2 3h13v14H2z" class="tb"/><path d="M1 1h12v2H1zM1 1v14" class="tb"/><path d="M5 5h7v2H5z" fill="#555"/><path d="M5 9h2v2H5zM8 9h2v2H8zM11 9h2v2h-2zM5 13h2v2H5zM8 13h2v2H8zM11 13h2v2h-2z" fill="#888"/></svg>DAX Measure</li>
        <li><svg class="chv" viewBox="0 0 8 14"><path d="M1 1l6 6-6 6" class="chev"/></svg><svg class="ti"><use href="#tbl"/></svg>Date-Dim</li>
        <li><svg class="chv" viewBox="0 0 8 14"><path d="M1 1l6 6-6 6" class="chev"/></svg><svg class="ti"><use href="#tbl"/></svg>Order-Fact</li>
        <li><svg class="chv" viewBox="0 0 8 14"><path d="M1 1l6 6-6 6" class="chev"/></svg><svg class="ti"><use href="#tbl"/></svg>product-Dim</li>
        <li><svg class="chv" viewBox="0 0 8 14"><path d="M1 1l6 6-6 6" class="chev"/></svg><svg class="ti"><use href="#tbl"/></svg>Sales Pesrson-Dim</li>
        <li><svg class="chv" viewBox="0 0 8 14"><path d="M1 1l6 6-6 6" class="chev"/></svg><svg class="ti"><use href="#tbl"/></svg>SalesTerritory-Dim</li>
        <li><svg class="chv" viewBox="0 0 8 14"><path d="M1 1l6 6-6 6" class="chev"/></svg><svg class="ti"><use href="#tbl"/></svg>ShipMethod-Dim</li>
        <li><svg class="chv" viewBox="0 0 8 14"><path d="M1 1l6 6-6 6" class="chev"/></svg><svg class="ti"><use href="#tbl"/></svg>Statues-Dim</li>
      </ul>
    </aside>
  </main>

  <footer class="status">
    <span class="pgof">Page 1 of 4</span>
    <span class="mode">Storage Mode: Mixed</span>
    <span class="minus">-</span>
    <div class="track"><i class="thumb"></i><i class="tick"></i></div>
    <span class="plusz">+</span>
    <span class="pct">44%</span>
    <svg class="fit" viewBox="0 0 20 16"><path d="M.7.7h18.600v14.600H.7z" fill="none" stroke="#666" stroke-width="1.400"/><path d="M6 4H3.500v2.500M14 4h2.500v2.500M6 12H3.500V9.500M14 12h2.500V9.500" fill="none" stroke="#555"/></svg>
  </footer>
  <div class="wm" aria-hidden="true"><span class="wa">مستقل</span><span class="we">mostaql.com</span></div>
</div>
</body>
</html>
```
FILE: styles.css
```css
* { box-sizing: border-box; }
html, body { margin: 0; padding: 0; }
body { font-family: "Open Sans", "Noto Sans", sans-serif; color: #333; background: #ececea; overflow: hidden; }
.defs { position: absolute; }
.app { position: relative; width: 1919px; height: 976px; display: flex; flex-direction: column; overflow: hidden; }
h2, h3, h4, h6, p, ul { margin: 0; padding: 0; font-weight: normal; }

/* ribbon */
.ribbon { height: 157px; background: #ebebe9; position: relative; z-index: 5; box-shadow: 0 1px 4px rgba(0,0,0,.25); }
.tabs { display: flex; height: 45px; font-size: 16px; color: #3a3a3a; }
.tabs span { text-align: center; line-height: 38px; position: relative; }
.tabs span:nth-child(1) { width: 83px; }
.tabs span:nth-child(2) { width: 84px; }
.tabs span:nth-child(3) { width: 85px; }
.tabs span:nth-child(4) { width: 112px; }
.tabs span:nth-child(5) { width: 78px; }
.tabs span:nth-child(6) { width: 106px; }
.tabs span:nth-child(7) { width: 79px; }
.tabs .on { font-weight: 600; color: #222; }
.tabs .on::after { content: ""; position: absolute; left: 18px; right: 18px; top: 35px; height: 3px; background: #0d5f58; }
.groups { display: flex; height: 110px; }
.grp { display: flex; flex-direction: column; border-right: 1px solid #c4c4c4; }
.g-clip { width: 201px; }
.g-data { width: 475px; padding-left: 7px; }
.g-query { width: 145px; padding-left: 10px; }
.g-insert { width: 184px; padding-left: 12px; }
.g-calc { width: 143px; padding-left: 8px; }
.g-sens { width: 91px; }
.g-share { width: 74px; }
.btns { display: flex; height: 95px; }
.btn { text-align: center; font-size: 13.5px; line-height: 20px; color: #3d3d3d; white-space: nowrap; }
.btn p { margin-top: 4px; }
.ri { display: block; width: 40px; height: 40px; margin: 5px auto 0; }
.btn.off { color: #a9a9a9; }
.w46 { width: 46px; } .w54 { width: 54px; } .w56 { width: 56px; } .w58 { width: 58px; } .w64 { width: 64px; }
.w65 { width: 65px; } .w70 { width: 70px; } .w71 { width: 71px; } .w73 { width: 73px; } .w90 { width: 90px; } .w101 { width: 101px; }
.g-clip .w56 { margin-left: 7px; }
.dd { width: 8px; height: 6px; margin-left: 3px; vertical-align: 1px; }
.dd.grey { margin-left: 0; }
.dd.grey .ddp, .off .ddp { stroke: #aaa; }
.ddp { fill: none; stroke: #333; stroke-width: 1.500; }
.grp h6 { font-size: 12.5px; line-height: 15px; text-align: center; color: #3d3d3d; }
.g-data h6 { padding-right: 7px; }
.clipcol { margin-left: 4px; padding-top: 0; }
.cr { height: 30px; display: flex; align-items: center; font-size: 13.5px; color: #a9a9a9; }
.cr svg { width: 17px; height: 21px; margin-right: 6px; flex: none; }
.xl { font: bold 15px "Open Sans", sans-serif; fill: #fff; text-anchor: middle; }
.ta { font: 27px "Open Sans", sans-serif; fill: #1f6fb2; text-anchor: middle; }

/* body */
.body { flex: 1; display: flex; min-height: 0; position: relative; }
.rail { width: 50px; flex: none; background: #ebebe9; padding-top: 0; }
.railbtn { height: 50px; display: flex; align-items: center; justify-content: center; border-left: 3px solid transparent; padding-right: 3px; }
.railbtn:nth-child(2) { height: 49px; }
.railbtn.active { border-left-color: #0d5f58; }
.railbtn svg { width: 21px; height: 21px; }
.rl { fill: none; stroke: #333; stroke-width: 1.300; }
.rg { fill: none; stroke: #666; stroke-width: 1.500; }
.tip { position: absolute; left: 67px; top: 5px; width: 96px; height: 40px; background: #fff; font-size: 14px; line-height: 40px; padding-left: 10px; color: #222; filter: drop-shadow(2px 4px 5px rgba(0,0,0,.22)); z-index: 4; white-space: nowrap; }
.tip::before { content: ""; position: absolute; left: -13px; top: 7px; width: 0; height: 0; border: 13px solid transparent; border-left: 0; border-right-color: #fff; }

.center { width: 1418px; flex: none; display: flex; flex-direction: column; }
.stage { height: 746px; display: flex; }
.canvas { width: 1377px; background: #fff; padding-left: 196px; flex: none; }
.page { position: relative; width: 985px; height: 737px; background: #e3e7ec; border: 2px dotted #444; border-top: 0; display: flex; flex-direction: column; }
.row { display: flex; flex: none; }
.cards { height: 103px; }
.card { background: #fff; border: 1px solid #666; border-radius: 7px; box-shadow: 4px 6px 7px rgba(70,130,210,.55); display: flex; flex-direction: column; overflow: hidden; position: relative; }
.card h3 { height: 19px; background: #adadad; font: bold 12.8px/20px Roboto, sans-serif; color: #333; text-align: center; flex: none; }
.card b { flex: 1; font: bold 29px/1 Roboto, sans-serif; letter-spacing: -1px; color: #111; display: flex; align-items: center; justify-content: center; padding-top: 3px; }
.c1 { width: 174px; }
.c2 { width: 164px; margin-left: 38px; }
.c3 { width: 181px; margin-left: 26px; }
.c4 { width: 163px; margin-left: 27px; }
.c5 { width: 166px; margin-left: 42px; }
.backb { position: absolute; left: 1px; top: 1px; width: 19px; height: 19px; fill: none; stroke: #444; stroke-width: 1.500; }
.mid { height: 251px; margin-top: 29px; }
.low { height: 333px; margin-top: 19px; }
.chart { background: #fff; border: 1px solid #666; border-radius: 7px; box-shadow: 4px 6px 7px rgba(70,130,210,.45); display: flex; flex-direction: column; overflow: hidden; }
.chart h2 { background: #adadad; font: bold 14.9px/17px "Liberation Serif", serif; color: #2a2a2a; text-align: center; flex: none; }
.h39 { height: 40px; padding: 3px 2px 0; }
.h22 { height: 22px; padding-top: 2px; }
.plot { display: block; flex: 1; width: 100%; min-height: 0; }
.ch1 { width: 635px; }
.ch2 { width: 330px; margin-left: 16px; }
.ch3 { width: 402px; }
.midcol { width: 273px; margin-left: 16px; display: flex; flex-direction: column; }
.ch4 { height: 240px; }
.ch5 { width: 273px; margin-left: 17px; }
.next { display: block; width: 148px; height: 64px; margin: 24px 0 0 61px; flex: none; }
.nextp { fill: #e3e7ec; stroke: #000; stroke-width: 6; stroke-linejoin: round; }
.nextt { font: bold 32px Roboto, sans-serif; fill: #0a0a0a; }

.grid { fill: none; stroke: #dcdcdc; stroke-width: 1; stroke-dasharray: 1 2; }
.bars rect { fill: #04284f; stroke: #8fa3b8; stroke-width: .5; }
.ln { fill: none; stroke-width: 2; }
.ln.a { stroke: #0b2a55; } .ln.b { stroke: #0a6be0; } .ln.c { stroke: #13223c; }
.legend text { font: 6.600px "Open Sans", sans-serif; fill: #666; }
.ax text { font: bold 12.500px Roboto, sans-serif; fill: #111; }
.ch3 .ax text { font-size: 12px; }
.end text { text-anchor: end; }
.mid-a text { text-anchor: middle; }
.axt { font: bold 11px Roboto, sans-serif; fill: #555; text-anchor: middle; }
.ayt { font: 9px "DejaVu Sans", sans-serif; fill: #666; text-anchor: middle; }
.cat text { font: 600 12px "Open Sans", sans-serif; fill: #111; }
.lg2 text { font: 7.200px "Open Sans", sans-serif; fill: #666; }
.lg2 .lgt { font-weight: 700; }

.vtools { position: absolute; left: 388px; top: 102px; display: flex; gap: 4.500px; }
.vtools span { width: 30px; height: 29px; background: #fff; display: flex; align-items: center; justify-content: center; }
.vtools svg { width: 21px; height: 22px; fill: none; stroke: #555; stroke-width: 1.300; }
.vtools .tu { stroke: #c8c8c8; }
.vtools .sp { margin-left: 10px; }
.vtools .dots { font-size: 20px; letter-spacing: 1px; color: #444; font-weight: bold; }

/* filters */
.filters { width: 41px; background: #fff; border-left: 1px solid #aaa; border-right: 1px solid #ccc; display: flex; flex-direction: column; align-items: center; font-size: 17.500px; font-weight: 600; color: #222; position: relative; }
.filters .ch { width: 18px; height: 18px; margin-top: 14px; }
.filters .fn { width: 16px; height: 16px; margin: 17px 0 0 6px; }
.filters span { writing-mode: vertical-rl; margin-top: 11px; line-height: 22px; }
.chev { fill: none; stroke: #333; stroke-width: 1.500; }

/* page tabs */
.pagetabs { height: 44px; display: flex; font-size: 14px; color: #444; border-bottom: 1px solid #d0d0d0; margin-left: -50px; width: 1468px; background: #ededeb; position: relative; z-index: 1; }
.arrows { width: 100px; padding-left: 57px; display: flex; gap: 22px; align-items: center; padding-bottom: 2px; }
.arrows i { width: 0; height: 0; border: 6px solid transparent; }
.al { border-left: 0 !important; border-right-color: #c0c0c0 !important; }
.ar { border-right: 0 !important; border-left-color: #c0c0c0 !important; }
.ptab { text-align: center; line-height: 41px; border-right: 1px solid #c9c9c9; }
.t1 { width: 94px; border-left: 1px solid #c9c9c9; }
.t2 { width: 96px; }
.t3 { width: 96px; }
.t4 { width: 134px; }
.ptab.on { background: #fff; color: #222; font-weight: 600; border-bottom: 5px solid #0d5f58; }
.plus { width: 48px; height: 40px; margin-top: 2px; background: #0d5f58; color: #fff; font: bold 26px/38px "Open Sans", sans-serif; text-align: center; }

/* panes */
.vizpane { width: 227px; flex: none; border-right: 1px solid #cfcfcf; border-left: 1px solid #cfcfcf; margin-left: 0; background: #ececea; }
.datapane { flex: 1; background: #ececea; }
.phead { height: 50px; display: flex; align-items: center; justify-content: space-between; padding: 0 9px 0 10px; }
.phead h4 { font-size: 18.500px; font-weight: 600; color: #2c2c2c; }
.phead .ch { width: 18px; height: 18px; }
.sub { font-size: 13.500px; font-weight: 600; color: #333; padding-left: 10px; line-height: 16px; }
.buildrow { position: relative; height: 55px; margin-top: 6px; padding: 0 0 0 10px; display: flex; align-items: flex-start; border-bottom: 1px solid #8a8a8a; }
.buildon { width: 40px; height: 40px; background: #b0b0b0; border-radius: 2px; padding: 5px; }
.buildon svg { display: block; width: 30px; height: 30px; }
.fmt { width: 32px; height: 32px; margin: 4px 0 0 46px; }
.notch { position: absolute; left: 23px; bottom: -6px; width: 13px; height: 13px; background: #ececea; border-top: 1px solid #8a8a8a; border-left: 1px solid #8a8a8a; transform: rotate(45deg); }
.vizgrid { display: grid; grid-template-columns: repeat(6, 35px); grid-auto-rows: 35px; padding: 8px 0 5px 8px; border-bottom: 1px solid #cfcfcf; place-items: center; }
.vi { width: 24px; height: 24px; fill: none; stroke: #333; stroke-width: 1.300; }
.vi .w { fill: #fff; }
.vi .b { fill: #2f75b9; stroke: #2f75b9; }
.vi .g { fill: #a3a3a3; stroke: #777; }
.vi .bl { stroke: #333; }
.vi .dk { fill: #333; stroke: #333; }
.vi .b2 { fill: #5b97cd; stroke: #5b97cd; }
.t123 { font: 10.500px "Open Sans", sans-serif; fill: #2f75b9; stroke: none; text-anchor: middle; }
.tr { font: bold 19px/24px "Open Sans", sans-serif; color: #1f6fb2; }
.tp { font: bold 21px/24px "Open Sans", sans-serif; color: #1f6fb2; padding-bottom: 3px; }
.more { font-size: 20px; font-weight: bold; letter-spacing: 1px; color: #333; line-height: 24px; padding-bottom: 8px; }
.sect { padding-top: 12px; }
.lab { font-size: 14px; line-height: 20px; padding-left: 15px; color: #333; }
.well { margin: 6px 0 0 5px; width: 213px; background: #fff; border: 1px dashed #a6a6a6; font-size: 14.200px; color: #333; padding-left: 13px; display: flex; align-items: center; white-space: nowrap; }
.h35 { height: 35px; }
.h31 { height: 31px; margin-top: 13px; }
.drill { padding-left: 10px; font-size: 14.200px; }
.dt { padding-left: 15px; margin-top: 16px; line-height: 18px; font-size: 14px; }
.tg { display: flex; justify-content: space-between; align-items: center; height: 20px; padding: 0 27px 0 15px; font-size: 14.200px; color: #333; }
.r1 { margin-top: 11px; }
.r2 { margin-top: 14px; }
.sw { width: 40px; height: 20px; border-radius: 10px; font-style: normal; font-size: 10.500px; display: flex; align-items: center; justify-content: center; gap: 2px; }
.sw i { width: 10px; height: 10px; border-radius: 50%; }
.sw.off { background: #fff; border: 1px solid #666; color: #444; }
.sw.off i { background: #444; }
.sw.onn { background: #0d5f58; color: #fff; }
.sw.onn i { background: #fff; }
.search { width: 214px; height: 33px; margin: 7px 0 0 6px; background: #fff; border: 1px solid #777; border-radius: 2px; display: flex; align-items: center; font-size: 15.500px; color: #444; padding-left: 10px; }
.search svg { width: 18px; height: 18px; margin-right: 7px; }
.fields { list-style: none; margin-top: 11px; }
.fields li { height: 30px; display: flex; align-items: center; font-size: 14px; color: #444; white-space: nowrap; padding-left: 12px; }
.chv { width: 8px; height: 14px; margin-right: 8px; }
.chv .chev { stroke: #666; stroke-width: 1.200; }
.ti { width: 16px; height: 16px; margin-right: 8px; }
.tb { fill: none; stroke: #444; stroke-width: 1.200; }
.tbh { fill: #555; }

/* status */
.status { height: 29px; display: flex; align-items: center; font-size: 14.300px; color: #444; background: #ededeb; flex: none; }
.pgof { padding-left: 7px; width: 1481px; }
.mode { width: 163px; white-space: nowrap; }
.minus { width: 6px; font-weight: bold; }
.track { position: relative; width: 125px; height: 1px; margin-left: 5px; background: #555; }
.thumb { position: absolute; left: 24px; top: -7px; width: 5px; height: 14px; background: #555; }
.tick { position: absolute; left: 62px; top: -3px; width: 2px; height: 6px; background: #555; }
.plusz { margin-left: 7px; width: 12px; font-size: 17px; font-weight: 600; line-height: 1; }
.pct { margin-left: 20px; }
.fit { width: 20px; height: 16px; margin-left: 23px; }

/* watermark */
.wm { position: absolute; left: 844px; top: 850px; width: 230px; display: flex; flex-direction: column; align-items: center; pointer-events: none; z-index: 6; color: rgba(110,110,110,.15); font-weight: 700; }
.wa { font: bold 66px/68px "DejaVu Sans", sans-serif; }
.we { font: bold 37px/37px "Open Sans", sans-serif; }
```
